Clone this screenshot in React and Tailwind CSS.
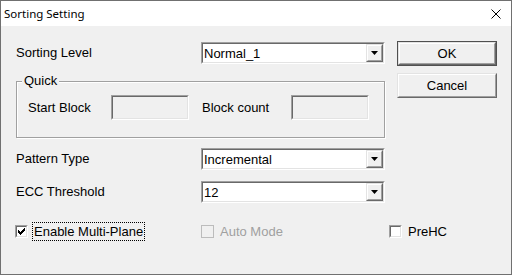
import React from 'react';

// classic 3D edges
function Sunken({ className = '', inner = '', children }) {
  return (
    <div className={`border border-t-[#a0a0a0] border-l-[#a0a0a0] border-b-white border-r-white ${className}`}>
      <div className={`h-full w-full border border-t-[#696969] border-l-[#696969] border-b-[#e3e3e3] border-r-[#e3e3e3] ${inner}`}>
        {children}
      </div>
    </div>
  );
}

function Raised({ className = '', inner = '', children }) {
  return (
    <div className={`border border-t-[#e3e3e3] border-l-[#e3e3e3] border-b-[#696969] border-r-[#696969] ${className}`}>
      <div className={`h-full w-full border border-t-white border-l-white border-b-[#a0a0a0] border-r-[#a0a0a0] bg-[#f0f0f0] ${inner}`}>
        {children}
      </div>
    </div>
  );
}

function Combo({ value }) {
  return (
    <Sunken className="w-[184px] h-[22px]" inner="bg-white flex items-center">
      <span className="flex-1 pl-[1px] leading-none">{value}</span>
      <Raised className="w-[17px] h-full" inner="flex items-center justify-center">
        <svg width="7" height="4" viewBox="0 0 7 4">
          <path d="M0 0 H7 L3.5 4 Z" fill="#000" />
        </svg>
      </Raised>
    </Sunken>
  );
}

function Row({ label, className = '', children }) {
  return (
    <div className={`flex items-center ${className}`}>
      <span className="w-[185px]">{label}</span>
      {children}
    </div>
  );
}

function Button({ children, isDefault }) {
  const body = (
    <Raised className="h-full w-full" inner="flex items-center justify-center">
      {children}
    </Raised>
  );
  if (isDefault) {
    return <div className="h-[25px] w-[100px] border border-[#505050]">{body}</div>;
  }
  return <div className="h-[25px] w-[100px]">{body}</div>;
}

function Check({ checked, disabled, focused, label, className = '' }) {
  return (
    <div className={`flex items-center ${className}`}>
      {disabled ? (
        <div className="w-[13px] h-[13px] border border-[#bcbcbc] bg-[#f0f0f0]" />
      ) : (
        <Sunken className="w-[13px] h-[13px]" inner="bg-white flex items-center justify-center">
          {checked && (
            <svg width="7" height="7" viewBox="0 0 7 7" shapeRendering="crispEdges">
              <path d="M0 2h1v1h1v1h1v-1h1v-1h1v-1h1v-1h1v3h-1v1h-1v1h-1v1h-1v1h-1v-1h-1v-1h-1z" fill="#000" />
            </svg>
          )}
        </Sunken>
      )}
      <span
        className={`ml-[4px] h-[19px] flex items-center px-[1px] border ${
          focused ? 'border-dotted border-black' : 'border-transparent'
        } ${disabled ? 'text-[#a0a0a0]' : ''}`}
      >
        {label}
      </span>
    </div>
  );
}

export default function App() {
  return (
    <div className="w-[512px] h-[275px] flex flex-col border border-[#707070] bg-[#f0f0f0] font-['Liberation_Sans',Arial,sans-serif] text-[13px] text-black overflow-hidden">
      {/* title bar */}
      <div className="h-[25px] shrink-0 bg-white flex items-center justify-between pl-[3px] pr-[10px] font-['Noto_Sans',sans-serif] text-[11.5px]">
        <span>Sorting Setting</span>
        <svg width="10" height="10" viewBox="0 0 10 10">
          <path d="M0.5 0.5 L9.5 9.5 M9.5 0.5 L0.5 9.5" stroke="#000" strokeWidth="1" />
        </svg>
      </div>

      <div className="flex-1 flex flex-col pl-[15px]">
        <div className="flex">
          <div className="w-[369px] flex flex-col pt-[16px]">
            <Row label="Sorting Level">
              <Combo value="Normal_1" />
            </Row>

            <div className="relative mt-[17px] h-[57px] border border-[#a0a0a0] shadow-[inset_1px_1px_0_#fff,1px_1px_0_#fff]">
              <span className="absolute left-[5px] -top-[9px] px-[2px] bg-[#f0f0f0] leading-[15px]">Quick</span>
              <div className="flex items-center pl-[11px] pt-[13px]">
                <span className="w-[83px]">Start Block</span>
                <Sunken className="w-[78px] h-[25px]" inner="bg-[#f0f0f0]" />
                <span className="ml-[13px] w-[89px]">Block count</span>
                <Sunken className="w-[78px] h-[25px]" inner="bg-[#f0f0f0]" />
              </div>
            </div>

            <Row label="Pattern Type" className="mt-[10px]">
              <Combo value="Incremental" />
            </Row>
            <Row label="ECC Threshold" className="mt-[11px]">
              <Combo value="12" />
            </Row>
          </div>

          <div className="ml-[12px] w-[100px] flex flex-col gap-[7px] pt-[15px]">
            <Button isDefault>OK</Button>
            <Button>Cancel</Button>
          </div>
        </div>

        <div className="flex items-center mt-[19px] -ml-px">
          <Check checked focused label="Enable Multi-Plane" className="w-[186px]" />
          <Check disabled label="Auto Mode" className="w-[188px]" />
          <Check label="PreHC" />
        </div>
      </div>
    </div>
  );
}
